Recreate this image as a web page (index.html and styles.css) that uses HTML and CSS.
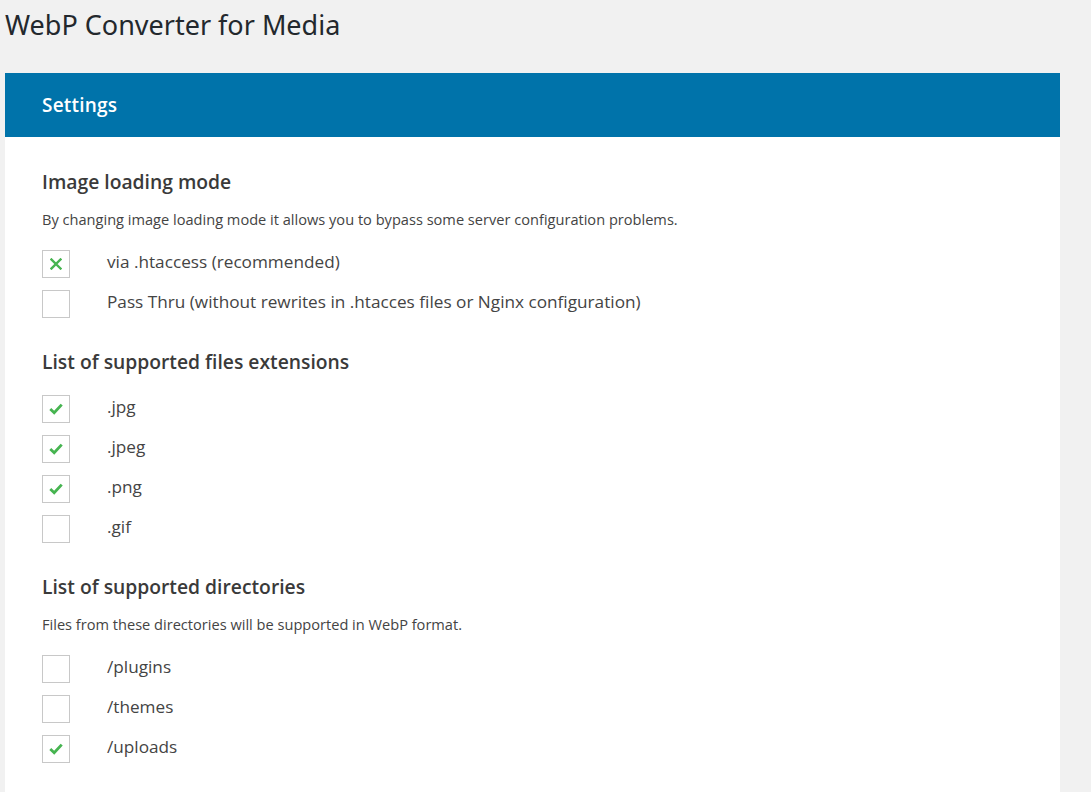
FILE: index.html
```html
<!DOCTYPE html>
<html lang="en">
<head>
<meta charset="utf-8">
<title>WebP Converter for Media</title>
<link rel="stylesheet" href="styles.css">
</head>
<body>
<div class="wrap">
  <h1 class="page-title">WebP Converter for Media</h1>
  <div class="panel">
    <div class="panel-header">Settings</div>
    <div class="panel-body">
      <section class="group">
        <h2 class="group-title">Image loading mode</h2>
        <p class="group-desc">By changing image loading mode it allows you to bypass some server configuration problems.</p>
        <div class="options">
          <label class="option"><span class="box"><svg class="mark" viewBox="0 0 12 12" width="12" height="12"><path d="M1.5 1.5 L10.5 10.5 M10.5 1.5 L1.5 10.5" stroke="#46b450" stroke-width="2.4" stroke-linecap="square" fill="none"/></svg></span><span class="label">via .htaccess (recommended)</span></label>
          <label class="option"><span class="box"></span><span class="label">Pass Thru (without rewrites in .htacces files or Nginx configuration)</span></label>
        </div>
      </section>
      <section class="group">
        <h2 class="group-title">List of supported files extensions</h2>
        <div class="options">
          <label class="option"><span class="box"><svg class="mark" viewBox="0 0 14 12" width="14" height="12"><path d="M1.3 6 L5.2 9.8 L12.7 1.6" stroke="#46b450" stroke-width="2.8" fill="none"/></svg></span><span class="label">.jpg</span></label>
          <label class="option"><span class="box"><svg class="mark" viewBox="0 0 14 12" width="14" height="12"><path d="M1.3 6 L5.2 9.8 L12.7 1.6" stroke="#46b450" stroke-width="2.8" fill="none"/></svg></span><span class="label">.jpeg</span></label>
          <label class="option"><span class="box"><svg class="mark" viewBox="0 0 14 12" width="14" height="12"><path d="M1.3 6 L5.2 9.8 L12.7 1.6" stroke="#46b450" stroke-width="2.8" fill="none"/></svg></span><span class="label">.png</span></label>
          <label class="option"><span class="box"></span><span class="label">.gif</span></label>
        </div>
      </section>
      <section class="group">
        <h2 class="group-title">List of supported directories</h2>
        <p class="group-desc">Files from these directories will be supported in WebP format.</p>
        <div class="options">
          <label class="option"><span class="box"></span><span class="label">/plugins</span></label>
          <label class="option"><span class="box"></span><span class="label">/themes</span></label>
          <label class="option"><span class="box"><svg class="mark" viewBox="0 0 14 12" width="14" height="12"><path d="M1.3 6 L5.2 9.8 L12.7 1.6" stroke="#46b450" stroke-width="2.8" fill="none"/></svg></span><span class="label">/uploads</span></label>
        </div>
      </section>
    </div>
  </div>
</div>
</body>
</html>
```
FILE: styles.css
```css
html, body {
  margin: 0;
  padding: 0;
  background: #f1f1f1;
}
body {
  font-family: "Open Sans", "Noto Sans", sans-serif;
  color: #444;
  overflow: hidden;
}
.wrap {
  padding: 0 31px 0 5px;
  height: 100vh;
  box-sizing: border-box;
  display: flex;
  flex-direction: column;
}
.page-title {
  margin: 0;
  padding: 8px 0 0;
  height: 73px;
  flex: none;
  box-sizing: border-box;
  font-family: "Noto Sans", "Open Sans", sans-serif;
  font-weight: 400;
  font-size: 27px;
  line-height: 34px;
  color: #23282d;
}
.panel {
  background: #fff;
  flex: 1;
  min-height: 0;
  overflow: hidden;
}
.panel-header {
  background: #0073aa;
  color: #fff;
  height: 64px;
  padding-left: 37px;
  display: flex;
  align-items: center;
  font-size: 19px;
  font-weight: 600;
  letter-spacing: 0.2px;
}
.panel-body {
  padding: 33px 37px 0;
  display: flex;
  flex-direction: column;
  gap: 32px;
}
.group {
  display: flex;
  flex-direction: column;
}
.group-title {
  margin: 0;
  font-size: 19.3px;
  font-weight: 600;
  line-height: 24px;
  color: #3a3a3a;
}
.group-desc {
  margin: 15px 0 0;
  font-size: 14.6px;
  line-height: 20px;
  color: #444;
}
.options {
  margin-top: 21px;
  display: flex;
  flex-direction: column;
  gap: 12px;
}
.option {
  display: flex;
  align-items: center;
  height: 28px;
}
.box {
  width: 28px;
  height: 28px;
  box-sizing: border-box;
  border: 1px solid #c8c8c8;
  background: #fff;
  display: flex;
  align-items: center;
  justify-content: center;
  flex: none;
}
.mark {
  display: block;
}
.label {
  margin-left: 37px;
  padding-bottom: 4px;
  font-size: 17.2px;
  line-height: 24px;
  color: #444;
}
```
